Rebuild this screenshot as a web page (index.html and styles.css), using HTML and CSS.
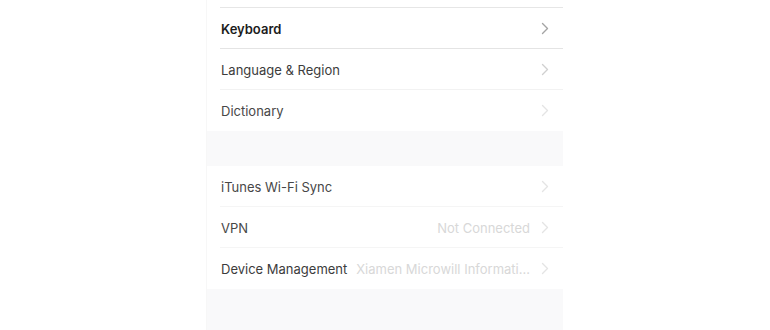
FILE: index.html
```html
<!DOCTYPE html>
<html>
<head>
<meta charset="utf-8">
<link rel="stylesheet" href="styles.css">
</head>
<body>
<div class="column">
  <div class="top-gap"></div>
  <div class="group">
    <div class="row sep-strong">
      <span class="label bold">Keyboard</span>
      <span class="right"><svg class="chev c1" viewBox="0 0 8 13"><path d="M1.5 1.5 L6.5 6.5 L1.5 11.5"/></svg></span>
    </div>
    <div class="row sep-light">
      <span class="label l2">Language &amp; Region</span>
      <span class="right"><svg class="chev c2" viewBox="0 0 8 13"><path d="M1.5 1.5 L6.5 6.5 L1.5 11.5"/></svg></span>
    </div>
    <div class="row">
      <span class="label l3">Dictionary</span>
      <span class="right"><svg class="chev c3" viewBox="0 0 8 13"><path d="M1.5 1.5 L6.5 6.5 L1.5 11.5"/></svg></span>
    </div>
  </div>
  <div class="band"></div>
  <div class="group">
    <div class="row sep-faint">
      <span class="label l3">iTunes Wi-Fi Sync</span>
      <span class="right"><svg class="chev c3" viewBox="0 0 8 13"><path d="M1.5 1.5 L6.5 6.5 L1.5 11.5"/></svg></span>
    </div>
    <div class="row sep-faint">
      <span class="label l3">VPN</span>
      <span class="right"><span class="value">Not Connected</span><svg class="chev c3" viewBox="0 0 8 13"><path d="M1.5 1.5 L6.5 6.5 L1.5 11.5"/></svg></span>
    </div>
    <div class="row">
      <span class="label l2">Device Management</span>
      <span class="right"><span class="value">Xiamen Microwill Informati...</span><svg class="chev c3" viewBox="0 0 8 13"><path d="M1.5 1.5 L6.5 6.5 L1.5 11.5"/></svg></span>
    </div>
  </div>
  <div class="band bottom"></div>
</div>
</body>
</html>
```
FILE: styles.css
```css
html, body {
  margin: 0;
  padding: 0;
  background: #ffffff;
}
body {
  width: 770px;
  height: 330px;
  overflow: hidden;
  font-family: Inter, "Liberation Sans", Arial, sans-serif;
  font-size: 13px;
}
.column {
  margin-left: 207px;
  width: 356px;
  display: flex;
  flex-direction: column;
  box-shadow: -1px 0 0 #f7f7f7;
}
.top-gap {
  height: 7px;
  border-bottom: 1px solid #e6e6e6;
  margin-left: 13px;
}
.group {
  background: #ffffff;
}
.row {
  height: 41px;
  box-sizing: border-box;
  display: flex;
  align-items: center;
  justify-content: space-between;
  padding-left: 14px;
  padding-right: 14px;
  position: relative;
}
.row.sep-strong::after,
.row.sep-light::after,
.row.sep-faint::after {
  content: "";
  position: absolute;
  left: 13px;
  right: 0;
  bottom: 0;
  height: 1px;
}
.row.sep-strong::after { background: #e4e4e4; }
.row.sep-light::after { background: #f2f2f2; }
.row.sep-faint::after { background: #f5f5f5; }
.label {
  color: #3a3a3a;
  white-space: nowrap;
}
.label.bold {
  color: #1c1c1c;
  font-weight: 600;
}
.label.l2 { color: #3c3c3c; }
.label.l3 { color: #474747; }
.right {
  display: flex;
  align-items: center;
  gap: 11px;
}
.value {
  color: #d8d8d8;
  white-space: nowrap;
}
.chev {
  width: 8px;
  height: 13px;
  fill: none;
  stroke-width: 1.4;
  stroke-linecap: round;
  stroke-linejoin: round;
}
.chev.c1 { stroke: #a4a4a4; }
.chev.c2 { stroke: #d0d0d0; }
.chev.c3 { stroke: #e4e4e4; }
.band {
  height: 35px;
  background: #f9f9fa;
}
.band.bottom {
  height: 41px;
}
```
